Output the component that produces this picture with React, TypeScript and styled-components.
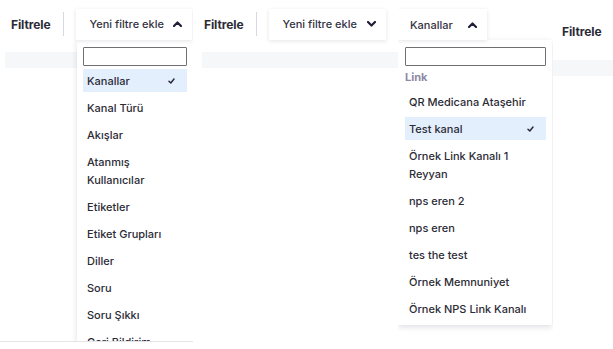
import React from 'react';
import styled, { createGlobalStyle } from 'styled-components';

const Global = createGlobalStyle`
  html, body { margin: 0; padding: 0; background: #fff; }
  body { font-family: Inter, "Noto Sans", sans-serif; color: #2a2a36; }
  * { box-sizing: border-box; }
`;

const Page = styled.div`
  display: flex;
  width: 613px;
  height: 349px;
  overflow: hidden;
  background: #fff;
`;

const Panel = styled.div<{ $w?: number; $h?: number; $edge?: boolean }>`
  position: relative;
  flex: ${(p) => (p.$w ? `0 0 ${p.$w}px` : '1 1 auto')};
  height: ${(p) => p.$h ?? 349}px;
  overflow: hidden;
  border-bottom: ${(p) => (p.$edge ? '1px solid #e4e4e8' : 'none')};
`;

const Toolbar = styled.div<{ $h: number; $pl: number; $pt?: number }>`
  display: flex;
  align-items: center;
  height: ${(p) => p.$h}px;
  padding-left: ${(p) => p.$pl}px;
  padding-top: ${(p) => p.$pt ?? 0}px;
`;

const Title = styled.div`
  font-size: 12px;
  font-weight: 700;
  color: #2b2b35;
  letter-spacing: -0.1px;
`;

const Divider = styled.div`
  width: 1px;
  height: 24px;
  background: #d9d7e3;
  margin: 0 12px 0 13px;
`;

const Button = styled.div<{ $w: number; $pl: number }>`
  display: flex;
  align-items: center;
  justify-content: space-between;
  width: ${(p) => p.$w}px;
  height: 31px;
  padding: 0 10px 0 ${(p) => p.$pl}px;
  background: #fff;
  box-shadow: 0 1px 4px rgba(30, 30, 60, 0.12);
  font-size: 11px;
  font-weight: 500;
  color: #33333f;
  position: relative;
  z-index: 2;
`;

const Band = styled.div<{ $ml: number; $mt: number }>`
  height: 16px;
  margin-left: ${(p) => p.$ml}px;
  margin-top: ${(p) => p.$mt}px;
  background: #f6f7f9;
`;

const Dropdown = styled.div<{ $left: number; $w: number; $h?: number }>`
  position: absolute;
  left: ${(p) => p.$left}px;
  top: 40px;
  width: ${(p) => p.$w}px;
  ${(p) => (p.$h ? `height: ${p.$h}px;` : 'bottom: 0;')}
  background: #fff;
  box-shadow: 0 2px 6px rgba(30, 30, 60, 0.14);
  padding: 7px 6px 0 ${(p) => (p.$left === 0 ? 7 : 6)}px;
  z-index: 1;
`;

const Search = styled.div`
  height: 19px;
  border: 1px solid #6f6f74;
  border-radius: 1px;
  background: #fff;
  margin-bottom: 3px;
`;

const Group = styled.div`
  font-size: 11px;
  font-weight: 700;
  color: #8d89a6;
  line-height: 16px;
  margin-bottom: 5px;
`;

const Item = styled.div<{ $active?: boolean }>`
  display: flex;
  align-items: flex-start;
  justify-content: space-between;
  padding: 2.5px 12px 2.5px 4px;
  margin-bottom: 4px;
  font-size: 11px;
  font-weight: 500;
  line-height: 18px;
  color: #2c2c36;
  background: ${(p) => (p.$active ? '#e3effc' : 'transparent')};
  white-space: pre-line;
`;

const Chevron = ({ up }: { up?: boolean }) => (
  <svg width="9" height="6" viewBox="0 0 9 6">
    <path
      d={up ? 'M1 5 L4.5 1.5 L8 5' : 'M1 1 L4.5 4.5 L8 1'}
      fill="none"
      stroke="#1f1f38"
      strokeWidth="2.2"
      strokeLinecap="round"
      strokeLinejoin="round"
    />
  </svg>
);

const Check = () => (
  <svg width="7" height="6" viewBox="0 0 7 6" style={{ marginTop: 6 }}>
    <path d="M1 3.2 L2.8 5 L6 1" fill="none" stroke="#2a2a3a" strokeWidth="1.5" strokeLinecap="round" strokeLinejoin="round" />
  </svg>
);

const filters = [
  'Kanal Türü',
  'Akışlar',
  'Atanmış\nKullanıcılar',
  'Etiketler',
  'Etiket Grupları',
  'Diller',
  'Soru',
  'Soru Şıkkı',
  'Geri Bildirim',
];

const channels = [
  'Örnek Link Kanalı 1\nReyyan',
  'nps eren 2',
  'nps eren',
  'tes the test',
  'Örnek Memnuniyet',
  'Örnek NPS Link Kanalı',
];

export default function App() {
  return (
    <>
      <Global />
      <Page>
        <Panel $w={193} $h={342} $edge>
          <Toolbar $h={48} $pl={11}>
            <Title>Filtrele</Title>
            <Divider />
            <Button $w={116} $pl={13}>
              Yeni filtre ekle
              <Chevron up />
            </Button>
          </Toolbar>
          <Band $ml={5} $mt={4} />
          <Dropdown $left={77} $w={116}>
            <Search />
            <Item $active>
              Kanallar
              <Check />
            </Item>
            {filters.map((f) => (
              <Item key={f}>{f}</Item>
            ))}
          </Dropdown>
        </Panel>

        <Panel $w={205}>
          <Toolbar $h={48} $pl={11}>
            <Title>Filtrele</Title>
            <Divider />
            <Button $w={117} $pl={13}>
              Yeni filtre ekle
              <Chevron />
            </Button>
          </Toolbar>
          <Band $ml={9} $mt={4} />
        </Panel>

        <Panel $w={155}>
          <Toolbar $h={40} $pl={0} $pt={9}>
            <Button $w={89} $pl={12}>
              Kanallar
              <Chevron up />
            </Button>
          </Toolbar>
          <Dropdown $left={0} $w={154} $h={285}>
            <Search />
            <Group>Link</Group>
            <Item>QR Medicana Ataşehir</Item>
            <Item $active>
              Test kanal
              <Check />
            </Item>
            {channels.map((c) => (
              <Item key={c}>{c}</Item>
            ))}
          </Dropdown>
        </Panel>

        <Panel>
          <Toolbar $h={62} $pl={9}>
            <Title>Filtrele</Title>
          </Toolbar>
          <Band $ml={0} $mt={-2} />
        </Panel>
      </Page>
    </>
  );
}
